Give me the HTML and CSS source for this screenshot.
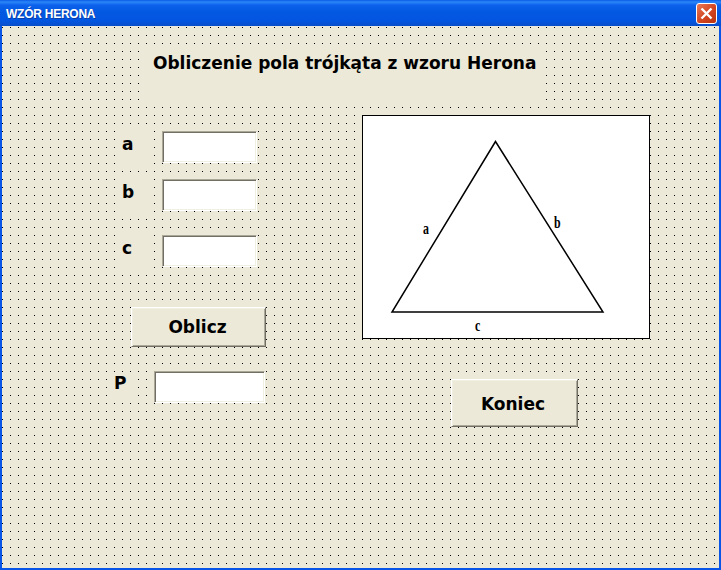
FILE: index.html
```html
<!DOCTYPE html>
<html lang="pl">

<head>
    <meta charset="UTF-8">
    <title>WZÓR HERONA</title>
    <link rel="stylesheet" href="styles.css">
</head>

<body>
    <div class="window">
        <div class="titlebar">
            <span class="title">WZÓR HERONA</span>
            <button class="close" aria-label="Zamknij">
                <svg width="13" height="13" viewBox="0 0 13 13">
                    <path d="M1.5 1.5 L11.5 11.5 M11.5 1.5 L1.5 11.5" stroke="#fff" stroke-width="2.4" fill="none" />
                </svg>
            </button>
        </div>
        <div class="form">
            <h1 class="heading">Obliczenie pola trójkąta z wzoru Herona</h1>
            <div class="panels">
                <div class="inputs">
                    <div class="row row-a">
                        <label class="side-label">a</label>
                        <input class="field" type="text">
                    </div>
                    <div class="row row-b">
                        <label class="side-label">b</label>
                        <input class="field" type="text">
                    </div>
                    <div class="row row-c">
                        <label class="side-label">c</label>
                        <input class="field" type="text">
                    </div>
                    <button class="btn btn-calc">Oblicz</button>
                    <div class="row-p">
                        <label class="p-label">P</label>
                        <input class="field field-p" type="text">
                    </div>
                </div>
                <div class="right">
                    <div class="picture">
                        <svg width="286" height="222" viewBox="0 0 286 222">
                            <path d="M132.5 25.5 L29 196 L240 196 Z" fill="none" stroke="#000" stroke-width="1.5" />
                            <text class="pic-text" transform="translate(60 118) scale(.85 1.15)">a</text>
                            <text class="pic-text" transform="translate(191 112) scale(.85 1.25)">b</text>
                            <text class="pic-text" transform="translate(112 215) scale(.85 1.15)">c</text>
                        </svg>
                    </div>
                    <button class="btn btn-end">Koniec</button>
                </div>
            </div>
        </div>
    </div>
</body>

</html>
```

FILE: styles.css
```css
body {
    margin: 0;
    padding: 0;
    font-family: "DejaVu Sans", sans-serif;
}

.window {
    width: 721px;
    height: 570px;
    background: #0855e8;
    overflow: hidden;
}

.titlebar {
    height: 26px;
    display: flex;
    align-items: flex-start;
    justify-content: space-between;
    padding: 0 4px 0 6px;
    box-sizing: border-box;
    background: linear-gradient(to bottom, #0a5ce6 0, #2b86f8 2px, #0d62ec 5px, #0358e2 12px, #0355e0 21px, #0a4dc8 26px);
}

.title {
    margin-top: 7px;
    font-family: "Liberation Sans", sans-serif;
    font-size: 12px;
    line-height: 15px;
    font-weight: bold;
    letter-spacing: -0.25px;
    color: #fff;
    text-shadow: 1px 1px 0 #0a3fa8;
}

.close {
    width: 21px;
    height: 21px;
    margin-top: 3px;
    padding: 0;
    display: flex;
    align-items: center;
    justify-content: center;
    border: 1px solid #fff;
    border-radius: 3px;
    background: linear-gradient(135deg, #e8795a, #d2451f 55%, #b8320f);
}

.form {
    height: 542px;
    margin: 0 2px;
    background-color: #ece9d8;
    background-image:
        linear-gradient(to right, transparent 1px, #ece9d8 1px),
        linear-gradient(to bottom, #000 1px, #ece9d8 1px);
    background-size: 8px 8px;
    background-position: 0 1px;
    overflow: hidden;
}

.heading {
    width: 403px;
    height: 56px;
    margin: 19px 0 0 141px;
    padding: 8px 0 0 10px;
    box-sizing: border-box;
    background: #ece9d8;
    font-size: 17px;
    line-height: 20px;
    font-weight: bold;
    color: #000;
    white-space: nowrap;
}

.panels {
    display: flex;
    margin-top: 14px;
}

.inputs {
    width: 252px;
    padding-left: 108px;
    display: flex;
    flex-direction: column;
    align-items: flex-start;
}

.row {
    display: flex;
    align-items: center;
    margin-left: 6px;
}

.row-a {
    margin-top: 10px;
}

.row-b {
    margin-top: 5px;
}

.row-c {
    margin-top: 13px;
}

.side-label {
    width: 37px;
    height: 43px;
    margin-right: 9px;
    padding-left: 6px;
    box-sizing: border-box;
    background: #ece9d8;
    font-size: 17px;
    line-height: 38px;
    font-weight: bold;
}

.field {
    width: 95px;
    height: 32px;
    margin: 0;
    padding: 0;
    box-sizing: border-box;
    background: #fff;
    border: 1px solid;
    border-color: #aca899 #fff #fff #aca899;
    box-shadow: inset 1px 1px 0 #716f64, inset -1px -1px 0 #f1efe2;
}

.field-p {
    width: 111px;
}

.btn {
    margin: 0;
    padding: 0;
    box-sizing: border-box;
    background: #ece9d8;
    border: 1px solid;
    border-color: #fff #716f64 #716f64 #fff;
    box-shadow: inset 1px 1px 0 #f1efe2, inset -1px -1px 0 #aca899;
    font-family: "DejaVu Sans", sans-serif;
    font-size: 17px;
    font-weight: bold;
    color: #000;
}

.btn-calc {
    width: 135px;
    height: 40px;
    margin: 35px 0 0 21px;
    padding-right: 2px;
}

.btn-end {
    width: 127px;
    height: 48px;
    margin: 40px 0 0 89px;
    padding: 2px 3px 0 0;
}

.row-p {
    display: flex;
    align-items: center;
    margin-top: 24px;
}

.p-label {
    width: 25px;
    height: 26px;
    margin-right: 19px;
    padding-left: 4px;
    box-sizing: border-box;
    background: #ece9d8;
    font-size: 17px;
    line-height: 18px;
    font-weight: bold;
}

.picture {
    width: 288px;
    height: 224px;
    box-sizing: border-box;
    border: 1px solid #000;
    background: #fff;
}

.picture svg {
    display: block;
}

.pic-text {
    font-family: "Liberation Serif", serif;
    font-size: 14px;
    font-weight: bold;
    fill: #000;
}
```
